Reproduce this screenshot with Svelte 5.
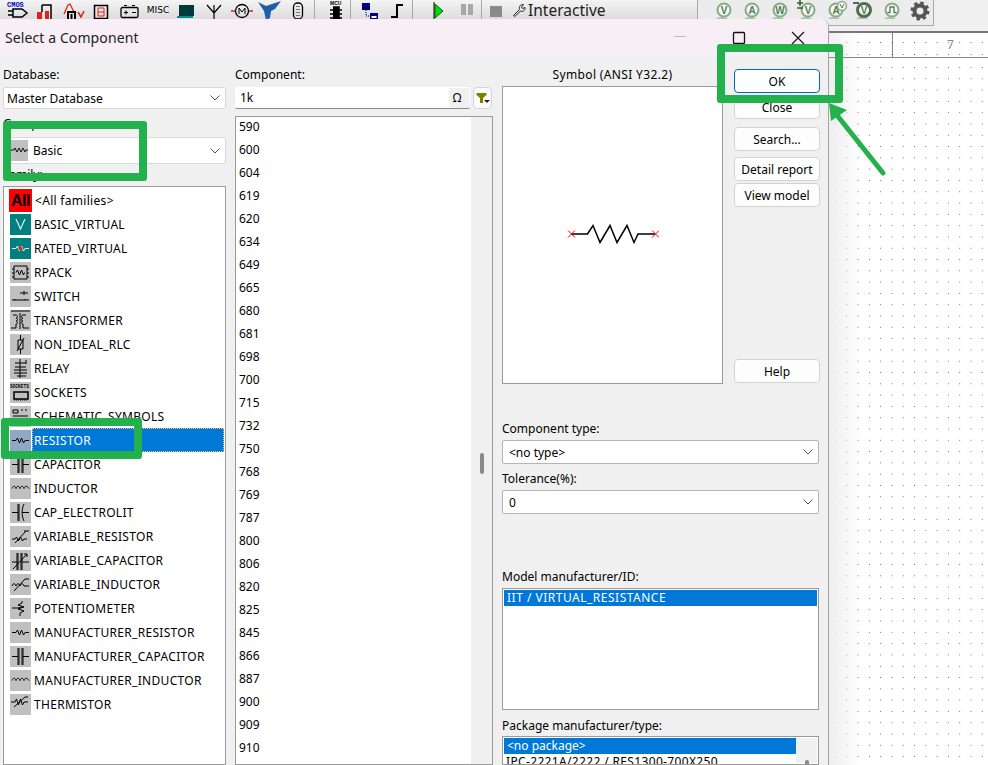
<script>
  // icon strokes for the family list, all on a 21x21 grey tile
  const glyphs = {
    resistor: "M2 10.5h4l1.5-2.5 2 5 2-5 2 5 1.5-2.5h4",
    capacitor: "M2 10.5h6M8 2v17M9 2v17M12 2v17M13 2v17M13 10.5h6",
    inductor: "M2 10.5c1-3 3-3 4 0c1-3 3-3 4 0c1-3 3-3 4 0c1-3 3-3 5 0",
    electrolit: "M2 10.5h6M8 2v17M9 2v17M14 2c-2.500 5-2.500 12 0 17M12 10.500h7",
    varres: "M2 13h3l1.500-2 2 4 2-4 2 4 1.500-2h3M5 17L16 5h3M14 5h2",
    varcap: "M2 12h5M7 3v17M8 3v17M11 3v17M12 3v17M12 12h7M3 19L17 4M14 4h3v3",
    varind: "M2 12c1-3 3-3 4 0c1-3 3-3 4 0c1-3 3-3 4 0h5M4 17L15 5h4",
    pot: "M2 10h6M12 3v2l-4 2 6 2-6 2 6 2-4 2v3M8 10l4-1",
    rpack: "M4 4h13v13H4zM2 7h2M2 11h2M2 15h2M17 7h2M17 11h2M17 15h2M6 10.500l1.500-2.500 2 5 2-5 2 5 1-2.500",
    switch: "M2 14h17M5 14v-1M15 14v-1M10 7h8M14 5v4",
    transformer: "M1 1h19M3 5h3c2 0 2 3 0 3c2 0 2 3 0 3c2 0 2 3 0 3v4H1M16 5h-3c-2 0-2 3 0 3c-2 0-2 3 0 3c-2 0-2 3 0 3v4h6M10 3v16",
    nonideal: "M10.500 1v5M10.500 15v5M8 6h5v9H8zM7 17L14 4",
    relay: "M10 1v19M5 5h11M5 9h11M4 12h13M4 15h13M7 18h9M16 2v4",
    schematic: "M3 4h5v3H3zM11 4h2M15 4h2M3 10h15M3 14h15M3 17h15",
    thermistor: "M1 8h4l1.500-3 2 6 2-6 2 6 1.500-3h4M4 13L15 3h3"
  };

  const families = [
    { name: "<All families>", type: "all" },
    { name: "BASIC_VIRTUAL", type: "teal-v" },
    { name: "RATED_VIRTUAL", type: "teal-r" },
    { name: "RPACK", glyph: "rpack" },
    { name: "SWITCH", glyph: "switch" },
    { name: "TRANSFORMER", glyph: "transformer" },
    { name: "NON_IDEAL_RLC", glyph: "nonideal" },
    { name: "RELAY", glyph: "relay" },
    { name: "SOCKETS", type: "sockets" },
    { name: "SCHEMATIC_SYMBOLS", glyph: "schematic" },
    { name: "RESISTOR", glyph: "resistor", selected: true },
    { name: "CAPACITOR", glyph: "capacitor" },
    { name: "INDUCTOR", glyph: "inductor" },
    { name: "CAP_ELECTROLIT", glyph: "electrolit" },
    { name: "VARIABLE_RESISTOR", glyph: "varres" },
    { name: "VARIABLE_CAPACITOR", glyph: "varcap" },
    { name: "VARIABLE_INDUCTOR", glyph: "varind" },
    { name: "POTENTIOMETER", glyph: "pot" },
    { name: "MANUFACTURER_RESISTOR", glyph: "resistor" },
    { name: "MANUFACTURER_CAPACITOR", glyph: "capacitor" },
    { name: "MANUFACTURER_INDUCTOR", glyph: "inductor" },
    { name: "THERMISTOR", glyph: "thermistor" }
  ];

  const values = [590, 600, 604, 619, 620, 634, 649, 665, 680, 681, 698, 700, 715, 732,
    750, 768, 769, 787, 800, 806, 820, 825, 845, 866, 887, 900, 909, 910];

  const buttons = [
    { label: "OK", primary: true },
    { label: "Close" },
    { label: "Search...", cls: "gap6" },
    { label: "Detail report", cls: "gap4" },
    { label: "View model" }
  ];

  // letters on the simulation meter icons
  const meters = [
    { letter: "V" },
    { letter: "A" },
    { letter: "W" },
    { letter: "V", plus: true },
    { letter: "A", extra: true },
    { letter: "V", minus: true }
  ];
</script>

{#snippet chevron()}
  <svg class="chevron" width="10" height="6" viewBox="0 0 10 6"><path d="M0.500 0.500L5 5L9.500 0.500" fill="none" stroke="#555" /></svg>
{/snippet}

<div class="screen">
  <!-- app toolbar behind the dialog -->
  <div class="toolbar">
    <div class="group first">
      <div class="cell">
        <svg width="24" height="22" viewBox="0 0 24 22">
          <text x="1" y="7" class="cmos">CMOS</text>
          <path d="M7 9h9l5 4-5 4H7zM2 11h5M2 15h5" fill="none" stroke="#000" stroke-width="1.500" />
        </svg>
      </div>
      <div class="cell">
        <svg width="22" height="22" viewBox="0 0 22 22">
          <path d="M7 5h9v16" fill="none" stroke="#000" stroke-width="1.500" />
          <path d="M2 12h5v8H2zM10 11h4v9h-4z" fill="#d22" />
          <path d="M7 5v7" stroke="#000" stroke-width="1.500" />
        </svg>
      </div>
      <div class="cell">
        <svg width="22" height="22" viewBox="0 0 22 22">
          <path d="M1 14L5 5l2-1 4 8" fill="none" stroke="#d22" stroke-width="1.300" />
          <path d="M5 20v-8h7v8M8.500 20v-6" fill="none" stroke="#000" stroke-width="2" />
          <path d="M15 12l3 5 3-6" fill="none" stroke="#c22" stroke-width="1.500" />
        </svg>
      </div>
      <div class="cell">
        <svg width="20" height="20" viewBox="0 0 20 20">
          <rect x="2.500" y="4.500" width="13" height="13" fill="none" stroke="#000" stroke-width="1.500" />
          <path d="M6 7h6v4H6zM6 11v4h6v-4" fill="none" stroke="#d22" />
        </svg>
      </div>
      <div class="cell">
        <svg width="22" height="20" viewBox="0 0 22 20">
          <rect x="2" y="6.500" width="17" height="10" rx="1.500" fill="none" stroke="#000" stroke-width="1.300" />
          <path d="M5 4.500h3M13 4.500h3M5 11.500h4M7 9.500v4M13 11.500h4" stroke="#000" fill="none" />
        </svg>
      </div>
      <div class="cell"><span class="misc">MISC</span></div>
      <div class="cell">
        <svg width="22" height="20" viewBox="0 0 22 20">
          <rect x="4" y="4" width="15" height="11" fill="#003a3a" />
          <path d="M2 16h16" stroke="#0a8a8a" stroke-width="2" />
        </svg>
      </div>
      <div class="cell">
        <svg width="20" height="20" viewBox="0 0 20 20"><path d="M3 4l7 8 7-8M10 4v14" fill="none" stroke="#000" stroke-width="1.200" /></svg>
      </div>
      <div class="cell">
        <svg width="22" height="20" viewBox="0 0 22 20">
          <circle cx="11" cy="10" r="6.500" fill="none" stroke="#000" stroke-width="1.300" />
          <path d="M0 10h4M18 10h4" stroke="#c22" stroke-width="1.500" />
          <path d="M8 13V7l3 4 3-4v6" fill="none" stroke="#000" />
        </svg>
      </div>
      <div class="cell">
        <svg width="26" height="22" viewBox="0 0 26 22">
          <path d="M1 2l8 4 6-2 9-3-6 8-4 2-1 7-4 2-2-9z" fill="#1f5fa8" />
          <path d="M15 19v3M20 19v3" stroke="#999" stroke-width="2" />
        </svg>
      </div>
      <div class="cell">
        <svg width="16" height="20" viewBox="0 0 16 20"><rect x="3.500" y="2" width="9" height="16" rx="4" fill="none" stroke="#000" stroke-width="1.300" /><path d="M7 5v10M9 5v10" stroke="#000" stroke-dasharray="1 2" /></svg>
      </div>
    </div>
    <div class="group bld">
      <svg width="12" height="20" viewBox="0 0 12 20"><text x="0" y="5" class="tiny">MCU</text><path d="M3 7h6v12H3M0 10h3M0 14h3M0 18h3M9 10h3M9 14h3M9 18h3" stroke="#000" stroke-width="1.500" fill="#000" /></svg>
    </div>
    <div class="group pad4">
      <div class="cell">
        <svg width="20" height="20" viewBox="0 0 20 20">
          <rect x="3" y="2" width="8" height="7" fill="#00007f" />
          <rect x="11" y="12" width="8" height="6" fill="#00007f" />
          <path d="M7 9v6h4" stroke="#000" stroke-dasharray="1 1" fill="none" />
          <rect x="12.500" y="15" width="5" height="2" fill="#fff" />
        </svg>
      </div>
      <div class="cell">
        <svg width="16" height="16" viewBox="0 0 16 16"><path d="M2 14h6V2h6" fill="none" stroke="#000" stroke-width="2" /></svg>
      </div>
    </div>
    <div class="group pad12">
      <div class="cell">
        <svg width="12" height="18" viewBox="0 0 12 18"><path d="M2 2l8 7-8 7z" fill="#0d0" stroke="#060" /><path d="M1 0v18" stroke="#000" /></svg>
      </div>
      <div class="cell pause"><span></span><span></span></div>
    </div>
    <div class="group stopgroup"><span class="stop"></span></div>
    <div class="group interactive">
      <svg width="14" height="14" viewBox="0 0 14 14"><path d="M1.500 12.500l6-6c-1-2.500 1-5.500 4-5l-2 2.500 1 1.500 2.500-1c.5 3-2.500 4.500-4.500 3.500l-5.500 5.500z" fill="none" stroke="#222" /></svg>
      <span>Interactive</span>
    </div>
    <div class="group meters">
      {#each meters as m}
        <div class="cell">
          <svg width="24" height="22" viewBox="0 0 24 22">
            <path d="M4 19c3-3 9-3 12 0z" fill="#a9c9a2" />
            <circle cx="12" cy="10" r="6.500" fill="#f4f7f4" stroke={m.minus ? "#4f6f4f" : "#8aa88a"} stroke-width={m.minus ? 3 : 2} />
            <text x="12" y="13.500" class="meter">{m.letter}</text>
            {#if m.plus}
              <path d="M1 3h6M4 0v6M1 8h6" stroke="#2f5f2f" stroke-width="1.500" />
            {/if}
            {#if m.minus}
              <path d="M1 3h6" stroke="#333" stroke-width="1.500" />
            {/if}
            {#if m.extra}
              <circle cx="18" cy="6" r="4.500" fill="#f4f7f4" stroke="#8aa88a" stroke-width="1.500" />
              <path d="M16 4l2 4 2-4" fill="none" stroke="#4f7f4f" />
            {/if}
          </svg>
        </div>
      {/each}
      <div class="cell">
        <svg width="24" height="22" viewBox="0 0 24 22">
          <path d="M4 19c3-3 9-3 12 0z" fill="#a9c9a2" />
          <circle cx="12" cy="10" r="6.500" fill="#f4f7f4" stroke="#8aa88a" stroke-width="2" />
          <path d="M7.500 12.500h2.500V7h4v5.500h2.500" fill="none" stroke="#4f7f4f" stroke-width="1.300" />
        </svg>
      </div>
      <div class="cell">
        <svg width="20" height="20" viewBox="0 0 20 20">
          <circle cx="10" cy="10" r="5.500" fill="none" stroke="#555" stroke-width="4" />
          <circle cx="10" cy="10" r="8" fill="none" stroke="#555" stroke-width="3" stroke-dasharray="3.300 3" />
        </svg>
      </div>
    </div>
    <div class="rest"></div>
  </div>

  <div class="band"></div>
  <div class="ruler">
    <div class="ruler-cell"></div>
    <div class="ruler-cell seven">7</div>
  </div>
  <div class="sheet"></div>

  <!-- the dialog floats over the schematic window -->
  <div class="dialog">
    <div class="titlebar">
      <span class="title">Select a Component</span>
      <div class="winbtns">
        <svg width="14" height="14" viewBox="0 0 14 14"><path d="M1 5.500h12" stroke="#bbb" /></svg>
        <svg width="14" height="14" viewBox="0 0 14 14"><rect x="1.500" y="1.500" width="11" height="11" rx="1" fill="none" stroke="#111" stroke-width="1.300" /></svg>
        <svg width="14" height="14" viewBox="0 0 14 14"><path d="M1 1l12 12M13 1L1 13" stroke="#111" stroke-width="1.100" /></svg>
      </div>
    </div>

    <div class="body">
      <div class="col left">
        <div class="label">Database:</div>
        <div class="select db"><span>Master Database</span>{@render chevron()}</div>
        <div class="label group-label">Group:</div>
        <div class="select grp">
          <svg class="tile" width="17" height="21" viewBox="0 0 17 21"><rect width="17" height="21" fill="#c0c0c0" /><path d="M0 10h3l1-2 2 4 2-4 2 4 2-4 2 4 1-2h2" fill="none" stroke="#000" stroke-width="0.900" /></svg>
          <span>Basic</span>{@render chevron()}
        </div>
        <div class="label family-label">Family:</div>
        <div class="listbox families">
          {#each families as f}
            <div class="family" class:selected={f.selected}>
              {#if f.type === "all"}
                <span class="fam-all">All</span>
              {:else if f.type === "sockets"}
                <svg class="fam-icon" width="21" height="21" viewBox="0 0 21 21">
                  <rect width="21" height="21" fill="#c0c0c0" />
                  <text x="0" y="6" class="sock">SOCKETS</text>
                  <rect x="4" y="10" width="14" height="7" fill="none" stroke="#000" stroke-width="1.500" />
                  <path d="M4 18h14" stroke="#000" stroke-dasharray="1 1" />
                </svg>
              {:else if f.type === "teal-v"}
                <svg class="fam-icon" width="21" height="21" viewBox="0 0 21 21">
                  <rect width="21" height="21" fill="#008080" />
                  <path d="M6 5l4.500 10L15 5" fill="none" stroke="#d8eeee" stroke-width="1.200" />
                </svg>
              {:else if f.type === "teal-r"}
                <svg class="fam-icon" width="21" height="21" viewBox="0 0 21 21">
                  <rect width="21" height="21" fill="#008080" />
                  <path d={glyphs.resistor} fill="none" stroke="#fff" />
                  <circle cx="10.500" cy="10.500" r="2" fill="#d22" />
                </svg>
              {:else}
                <svg class="fam-icon" width="21" height="21" viewBox="0 0 21 21">
                  <rect width="21" height="21" fill={f.selected ? "#8fa9c4" : "#c0c0c0"} />
                  <path d={glyphs[f.glyph]} fill="none" stroke="#000" stroke-width="1" />
                </svg>
              {/if}
              <span class="fam-name">{f.name}</span>
            </div>
          {/each}
        </div>
      </div>

      <div class="col middle">
        <div class="label">Component:</div>
        <div class="search-row">
          <div class="search">
            <span>1k</span>
            <span class="omega">Ω</span>
          </div>
          <div class="filter">
            <svg width="14" height="12" viewBox="0 0 14 12"><path d="M0.500 1h10v2L7 6v5H4V6L0.500 3z" fill="#808000" /><path d="M8 8h6l-3 3z" fill="#222" /></svg>
          </div>
        </div>
        <div class="listbox values">
          <div class="value-rows">
            {#each values as v}
              <div class="value">{v}</div>
            {/each}
          </div>
          <div class="track"><div class="thumb"></div></div>
        </div>
      </div>

      <div class="col right">
        <div class="top-row">
          <div class="symbol-col">
            <div class="label center">Symbol (ANSI Y32.2)</div>
            <div class="symbol">
              <svg width="92" height="24" viewBox="0 0 92 24">
                <path d="M4 12h16.500l5.500-8.500 7 17 10-17 7 17 10-17 7 17 4-8.500H88" fill="none" stroke="#000" stroke-width="1.500" />
                <path d="M1 8.500l7 7M8 8.500l-7 7M85 8.500l7 7M92 8.500l-7 7" stroke="#e00" />
              </svg>
            </div>
          </div>
          <div class="buttons">
            {#each buttons as b}
              <div class="btn {b.cls ?? ''}" class:primary={b.primary}>{b.label}</div>
            {/each}
            <div class="btn help">Help</div>
          </div>
        </div>

        <div class="label type-label">Component type:</div>
        <div class="select wide"><span>&lt;no type&gt;</span>{@render chevron()}</div>
        <div class="label tol-label">Tolerance(%):</div>
        <div class="select wide"><span>0</span>{@render chevron()}</div>
        <div class="label model-label">Model manufacturer/ID:</div>
        <div class="listbox model">
          <div class="picked caps">IIT / VIRTUAL_RESISTANCE</div>
        </div>
        <div class="label pkg-label">Package manufacturer/type:</div>
        <div class="listbox package">
          <div class="pkg-rows">
            <div class="picked">&lt;no package&gt;</div>
            <div class="pkg-row">IPC-2221A/2222 / RES1300-700X250</div>
          </div>
          <div class="pkg-track"><div class="pkg-thumb"></div></div>
        </div>
      </div>
    </div>
  </div>

  <!-- green tutorial marks drawn on top of the screenshot -->
  <div class="mark mark-group"></div>
  <div class="mark mark-resistor"></div>
  <div class="mark mark-ok"></div>
  <svg class="arrow" width="70" height="84" viewBox="0 0 70 84">
    <path d="M55 71L8 12" fill="none" stroke="#22b14c" stroke-width="5" stroke-linecap="round" />
    <path d="M1 1L19 8L3 19z" fill="#22b14c" />
  </svg>
</div>

<style>
  :global(body) {
    margin: 0;
    background: #fff;
  }

  .screen {
    position: relative;
    width: 988px;
    height: 765px;
    overflow: hidden;
    font-family: "Noto Sans", "Open Sans", sans-serif;
    font-size: 12px;
    color: #000;
    display: flex;
    flex-direction: column;
  }

  /* toolbar */
  .toolbar {
    height: 26px;
    display: flex;
    flex: none;
    background: #f0f0f0;
  }

  .group {
    display: flex;
    align-items: flex-start;
    box-sizing: border-box;
    border-right: 1px solid #a8a8a8;
    background: linear-gradient(#f4f4f4, #dcdcdc);
    height: 19px;
  }

  .first { width: 315px; padding-left: 4px; }
  .bld { width: 36px; padding: 0 0 0 15px; }
  .pad4 { width: 62px; padding-left: 4px; }
  .pad12 { width: 69px; padding-left: 12px; }
  .stopgroup { width: 26px; padding: 6px 0 0 8px; border-right: 0; }

  .cell {
    width: 28px;
    height: 22px;
    flex: none;
    display: flex;
    align-items: center;
    justify-content: center;
  }

  .misc {
    font-size: 9px;
    font-family: "DejaVu Sans", sans-serif;
    margin-top: -3px;
  }

  .cmos {
    font: bold 7px "Liberation Mono", monospace;
    fill: #00c;
  }

  .tiny {
    font: bold 5px "Liberation Sans", sans-serif;
  }

  .pause {
    gap: 2px;
    height: 18px;
  }

  .pause span {
    width: 5px;
    height: 11px;
    background: #a8a8a8;
  }

  .stop {
    width: 12px;
    height: 11px;
    background: #8a8a8a;
  }

  .interactive {
    width: 189px;
    padding-left: 4px;
    gap: 2px;
    border-right: 0;
    font-size: 15.5px;
    line-height: 18px;
    color: #222;
    align-items: center;
  }

  .meters {
    width: 237px;
    height: 26px;
    padding-left: 12px;
    background: #ececec;
    border-left: 1px solid #a8a8a8;
    border-bottom: 1px solid #a8a8a8;
    border-right: 1px solid #a8a8a8;
  }

  .meter {
    font: bold 10px "Liberation Sans", sans-serif;
    text-anchor: middle;
    fill: #4f7f4f;
  }

  .rest {
    flex: 1;
  }

  /* schematic window */
  .band {
    height: 7px;
    flex: none;
    box-sizing: border-box;
    background: #f0f0f0;
    border-bottom: 2px solid #777;
  }

  .ruler {
    height: 25px;
    flex: none;
    display: flex;
    box-sizing: border-box;
    border-bottom: 1px solid #888;
    background:
      linear-gradient(to right, rgba(240, 240, 240, 1) 828px, rgba(255, 255, 255, 0) 862px),
      radial-gradient(circle at 0.5px 0.5px, #666 0.7px, transparent 0.8px) -1px -3px / 11.3px 12px,
      #fff;
  }

  .ruler-cell {
    width: 893px;
    border-right: 1px solid #888;
  }

  .seven {
    width: 95px;
    border: 0;
    text-align: center;
    color: #888;
    line-height: 24px;
    padding-left: 20px;
    box-sizing: border-box;
  }

  .sheet {
    flex: 1;
    background:
      linear-gradient(to right, rgba(238, 238, 238, 1) 828px, rgba(255, 255, 255, 0) 862px),
      radial-gradient(circle at 0.5px 0.5px, #666 0.7px, transparent 0.8px) -1px 9px / 11.3px 11.3px,
      #fff;
  }

  /* dialog */
  .dialog {
    position: absolute;
    left: 0;
    top: 19px;
    bottom: 0;
    width: 829px;
    box-sizing: border-box;
    border-right: 1px solid #a4a4a4;
    border-top-right-radius: 8px;
    background: #f0f0f0;
    overflow: hidden;
    display: flex;
    flex-direction: column;
  }

  .titlebar {
    height: 37px;
    flex: none;
    background: #f7eef6;
    display: flex;
    align-items: center;
    justify-content: space-between;
    padding-left: 5px;
  }

  .title {
    font-size: 14px;
    letter-spacing: 0.1px;
    color: #222;
  }

  .winbtns {
    display: flex;
    gap: 45px;
    padding-right: 23px;
  }

  .body {
    flex: 1;
    min-height: 0;
    display: flex;
    gap: 9px;
    padding: 10px 0 0 3px;
  }

  .col {
    display: flex;
    flex-direction: column;
    min-height: 0;
  }

  .left { width: 223px; }
  .middle { width: 258px; }
  .right { width: 318px; }

  .label {
    height: 16px;
    line-height: 18px;
    flex: none;
    white-space: nowrap;
  }

  .center {
    text-align: center;
    letter-spacing: 0.35px;
  }

  .select {
    box-sizing: border-box;
    flex: none;
    background: #fff;
    border: 1px solid #d9d9d9;
    border-radius: 2px;
    display: flex;
    align-items: center;
    padding-left: 3px;
    position: relative;
  }

  .chevron {
    margin-left: auto;
    margin-right: 5px;
  }

  .db { height: 22px; margin-top: 5px; }
  .group-label { margin-top: 6px; }
  .grp { height: 27px; margin-top: 6px; padding-left: 7px; gap: 5px; }
  .tile { flex: none; }
  .family-label { margin-top: 2px; }
  .wide { height: 24px; margin-top: 4px; width: 317px; padding-left: 6px; border-color: #b4b4b4; }

  .listbox {
    box-sizing: border-box;
    background: #fff;
    border: 1px solid #9a9a9a;
    min-height: 0;
    overflow: hidden;
  }

  .families {
    flex: 1;
    margin-top: 4px;
    padding: 1px 1px 0 5px;
  }

  .family {
    height: 24px;
    display: flex;
    align-items: center;
    white-space: nowrap;
  }

  .fam-icon {
    flex: none;
    margin-left: 1px;
  }

  .fam-all {
    width: 23px;
    height: 23px;
    flex: none;
    background: #f00;
    color: #000;
    font: bold 16px/23px "Liberation Sans", sans-serif;
    letter-spacing: -0.5px;
    text-align: center;
  }

  .sock {
    font: bold 4.500px "Liberation Mono", monospace;
  }

  .fam-name {
    flex: 1;
    height: 24px;
    line-height: 26px;
    padding-left: 2px;
    margin-left: 1px;
    box-sizing: border-box;
    letter-spacing: 0.3px;
  }

  .family:first-child .fam-name {
    margin-left: 0;
    padding-left: 3px;
  }

  .selected .fam-name {
    background: #0078d7;
    color: #fff;
    outline: 1px dotted #ffb870;
    outline-offset: -1px;
  }

  .search-row {
    display: flex;
    margin-top: 5px;
    height: 22px;
    gap: 3px;
    flex: none;
  }

  .search {
    width: 235px;
    box-sizing: border-box;
    background: #fff;
    border-bottom: 1px solid #8a8a8a;
    border-radius: 2px;
    padding-left: 5px;
    display: flex;
    align-items: center;
    justify-content: space-between;
  }

  .omega {
    width: 16px;
    height: 20px;
    line-height: 20px;
    text-align: center;
    background: #f0f0f0;
    padding-right: 4px;
    margin-right: 1px;
  }

  .filter {
    width: 19px;
    height: 22px;
    box-sizing: border-box;
    background: #fbfbfb;
    border: 1px solid #d4d4d4;
    border-radius: 4px;
    display: flex;
    align-items: center;
    justify-content: center;
  }

  .values {
    flex: 1;
    margin-top: 7px;
    display: flex;
  }

  .value-rows {
    flex: 1;
    padding-left: 3px;
    display: flex;
    flex-direction: column;
    gap: 5px;
  }

  .value {
    height: 18px;
    line-height: 20px;
    flex: none;
  }

  .track {
    width: 21px;
    background: #f0f0f0;
    display: flex;
    justify-content: center;
  }

  .thumb {
    width: 4px;
    height: 21px;
    margin-top: 336px;
    background: #8a8a8a;
    border-radius: 2px;
  }

  .top-row {
    display: flex;
    gap: 11px;
    height: 318px;
    flex: none;
  }

  .symbol-col {
    width: 221px;
    display: flex;
    flex-direction: column;
  }

  .symbol {
    flex: 1;
    margin-top: 4px;
    padding-bottom: 2px;
    background: #fff;
    border: 1px solid #9a9a9a;
    display: flex;
    align-items: center;
    justify-content: center;
  }

  .buttons {
    width: 86px;
    padding-top: 3px;
    display: flex;
    flex-direction: column;
    gap: 2px;
  }

  .btn {
    height: 24px;
    box-sizing: border-box;
    flex: none;
    background: #fdfdfd;
    border: 1px solid #d3d3d3;
    border-radius: 4px;
    text-align: center;
    line-height: 24px;
  }

  .primary {
    border-color: #0067c0;
    background: #fff;
  }

  .gap6 { margin-top: 6px; }
  .gap4 { margin-top: 4px; }

  .help {
    margin-top: auto;
    margin-bottom: 1px;
  }

  .type-label { margin-top: 36px; }
  .tol-label { margin-top: 6px; }
  .model-label { margin-top: 54px; }
  .pkg-label { margin-top: 7px; }

  .model {
    width: 317px;
    height: 122px;
    margin-top: 4px;
    flex: none;
    padding: 1px;
  }

  .picked {
    background: #0078d7;
    color: #fff;
    height: 16px;
    line-height: 16px;
    padding-left: 3px;
  }

  .caps {
    letter-spacing: 0.5px;
  }

  .package {
    width: 317px;
    flex: 1;
    margin-top: 3px;
    padding: 1px;
    display: flex;
  }

  .pkg-rows {
    width: 292px;
  }

  .pkg-row {
    height: 16px;
    line-height: 16px;
    padding-left: 2px;
    white-space: nowrap;
    letter-spacing: 0.35px;
  }

  .pkg-track {
    flex: 1;
    background: #f0f0f0;
    display: flex;
    justify-content: center;
  }

  .pkg-thumb {
    width: 4px;
    height: 10px;
    margin-top: 22px;
    background: #8a8a8a;
    border-radius: 2px;
  }

  /* annotations */
  .mark {
    position: absolute;
    box-sizing: border-box;
    border: 8px solid #22b14c;
    border-radius: 3px;
  }

  .mark-group { left: 3px; top: 121px; width: 144px; height: 60px; }
  .mark-resistor { left: 1px; top: 418px; width: 141px; height: 41px; }
  .mark-ok { left: 717px; top: 44px; width: 126px; height: 59px; }

  .arrow {
    position: absolute;
    left: 828px;
    top: 102px;
  }
</style>
